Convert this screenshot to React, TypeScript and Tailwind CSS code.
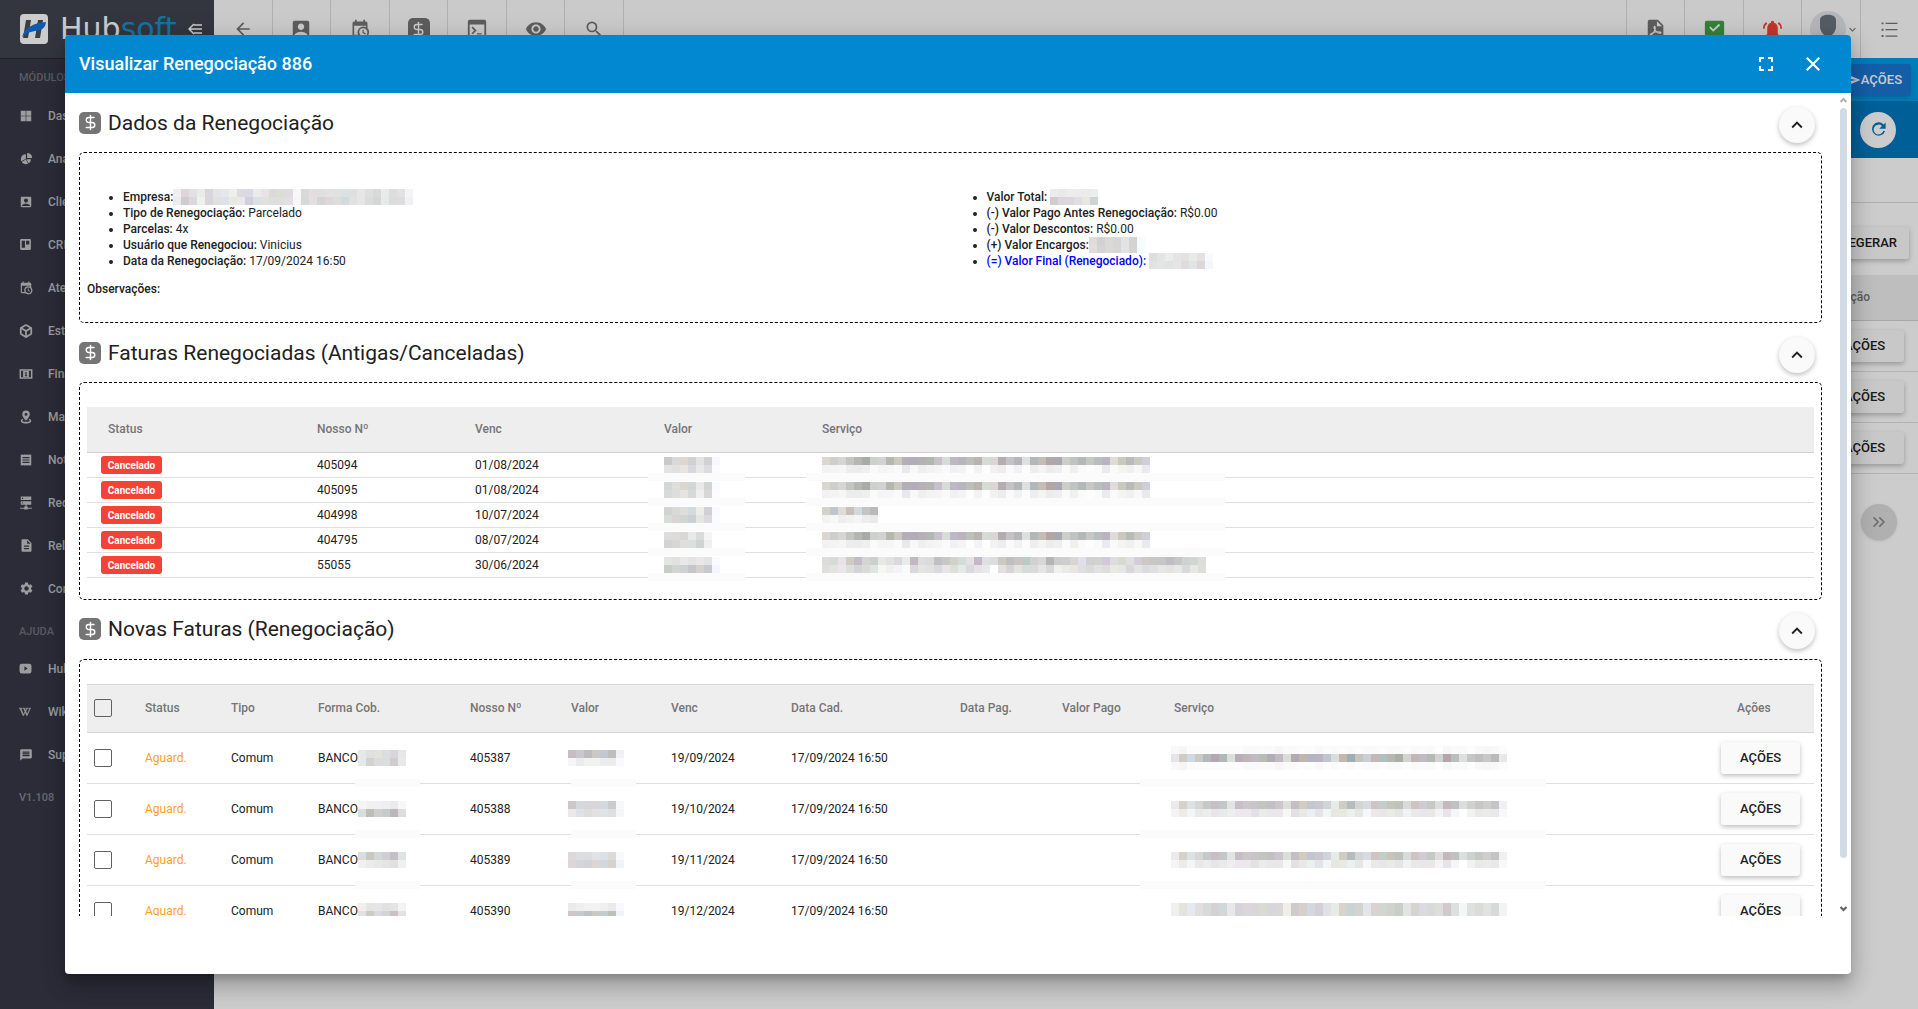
import React from 'react';
import {
  MdAccountBox,
  MdArrowBack,
  MdClose,
  MdDescription,
  MdFullscreen,
  MdKeyboardArrowDown,
  MdKeyboardArrowUp,
  MdMessage,
  MdReceipt,
  MdSearch,
  MdSend,
  MdSettings,
  MdVisibility,
} from 'react-icons/md';
import { FaWikipediaW } from 'react-icons/fa';
import { Box, ChevronsRight, DollarSign } from 'lucide-react';

interface IconProps {
  size?: number;
  className?: string;
}

const Glyph: React.FC<IconProps & { d: string }> = ({ d, size = 24, className }) => (
  <svg width={size} height={size} viewBox="0 0 24 24" fill="currentColor" fillRule="evenodd" className={className}>
    <path d={d} />
  </svg>
);

const ICONS = {
  grid: 'M3 3h8.5v8.5H3zM12.5 3H21v8.5h-8.5zM3 12.5h8.5V21H3zM12.5 12.5H21V21h-8.5z',
  pie: 'M21,11H13V3A8,8 0 0,1 21,11M19,13C19,15.78 17.58,18.23 15.43,19.67L11.58,13H19M11,21C8.22,21 5.77,19.58 4.33,17.43L10.82,13.68L14.56,20.17C13.5,20.7 12.28,21 11,21M3,13A8,8 0 0,1 11,5V12.42L3.83,16.56C3.3,15.5 3,14.28 3,13Z',
  trello: 'M4 2h16a2 2 0 0 1 2 2v16a2 2 0 0 1-2 2H4a2 2 0 0 1-2-2V4a2 2 0 0 1 2-2zM5 5v13h6V5zM13 5v7h6V5z',
  calendar:
    'M15,13H16.5V15.82L18.94,17.23L18.19,18.53L15,16.69V13M19,8H5V19H9.67C9.24,18.09 9,17.07 9,16A7,7 0 0,1 16,9C17.07,9 18.09,9.24 19,9.67V8M5,21C3.89,21 3,20.1 3,19V5C3,3.89 3.89,3 5,3H6V1H8V3H16V1H18V3H19A2,2 0 0,1 21,5V11.1C22.24,12.36 23,14.09 23,16A7,7 0 0,1 16,23C14.09,23 12.36,22.24 11.1,21H5M16,11.15A4.85,4.85 0 0,0 11.15,16C11.15,18.68 13.32,20.85 16,20.85A4.85,4.85 0 0,0 20.85,16C20.85,13.32 18.68,11.15 16,11.15Z',
  cash: 'M1 4h22v16H1zM3.500 6.500v11h17v-11zM7 7h10v10H7zM11 8.500v1.200h-1v1.500h1.200v3H10V15.700h4V14.200h-1V8.500z',
  marker:
    'M12 1a6.500 6.500 0 0 1 6.500 6.500C18.500 12 12 18 12 18S5.500 12 5.500 7.500A6.500 6.500 0 0 1 12 1zM12 5a2.500 2.500 0 1 0 0 5a2.500 2.500 0 0 0 0-5zM6 15l1.500 1.600C6 17.300 5.500 18 6 18.800C7.500 20.800 16.500 20.800 18 18.800C18.500 18 18 17.300 16.500 16.600L18 15C21 16.500 22 19 20 21C17 24 7 24 4 21C2 19 3 16.500 6 15z',
  server: 'M3 1h18v6H3zM3 9h18v6H3zM11 15h2v3h2v2h7v2h-7v1H9v-1H2v-2h7v-2h2zM5 3v2h2V3zM5 11v2h2v-2z',
  youtube: 'M5 3h14a4 4 0 0 1 4 4v10a4 4 0 0 1-4 4H5a4 4 0 0 1-4-4V7a4 4 0 0 1 4-4zM10 8v8l6-4z',
  console:
    'M4 2h16a2 2 0 0 1 2 2v16a2 2 0 0 1-2 2H4a2 2 0 0 1-2-2V4a2 2 0 0 1 2-2zM4 7v13h16V7zM6 10.500l1.300-1.300L11.600 13.500L7.300 17.800L6 16.500l3-3zM12 16.500h5v1.500h-5z',
  refresh:
    'M18.400 5.600L21 3v8h-8l3.400-3.400A6.200 6.200 0 1 0 18 13.800h2.300A8.400 8.400 0 1 1 18.400 5.600z',
  bell: 'M12 2a1.800 1.800 0 0 1 1.800 1.800v.4A6.500 6.500 0 0 1 18 10.500V17l2 2v1H4v-1l2-2v-6.500a6.500 6.500 0 0 1 4.200-6.300v-.4A1.800 1.800 0 0 1 12 2zM4.500 3.500L6 5A8 8 0 0 0 3 11H1A10 10 0 0 1 4.500 3.500zM19.500 3.500A10 10 0 0 1 23 11h-2a8 8 0 0 0-3-6z',
  check: 'M3 2h18a2 2 0 0 1 2 2v13a2 2 0 0 1-2 2h-5l-4 4-4-4H3a2 2 0 0 1-2-2V4a2 2 0 0 1 2-2zM6 10l4.500 4.500L18.500 7L17 5.500l-6.500 6.200-3-3z',
  list: 'M2 3h2.500v2.500H2zM7 3.500h15v1.500H7zM2 11h2.500v2.500H2zM7 11.500h15V13H7zM2 19h2.500v2.500H2zM7 19.500h15V21H7z',
};

const MoneyIcon: React.FC = () => (
  <span className="inline-flex h-[22px] w-[22px] shrink-0 items-center justify-center rounded-[5px] bg-[#757575] text-white">
    <DollarSign size={17} strokeWidth={2} />
  </span>
);

const PdfIcon: React.FC = () => (
  <svg width="22" height="22" viewBox="0 0 24 24">
    <path d="M5 2h9l6 6v12a2 2 0 0 1-2 2H5a2 2 0 0 1-2-2V4a2 2 0 0 1 2-2zM13 3.500V9h5.500z" fill="currentColor" fillRule="evenodd" />
    <path
      d="M6 19C9 18 12 12 11 9.500C10.500 8.500 9.500 9.500 10 11C11 14.500 14 17 17 16.500C18 16 17 15 15 15C12 15 8 16 6.500 17.500C5.500 18.500 5.500 19.200 6 19z"
      fill="none"
      stroke="#fdfdfd"
      strokeWidth="1.300"
    />
  </svg>
);

const ScrollArrow: React.FC<{ d: string; className: string }> = ({ d, className }) => (
  <svg width="7" height="6" viewBox="0 0 7 6" fill="none" stroke="currentColor" strokeWidth="2" className={className}>
    <path d={d} />
  </svg>
);

// Hidden values are covered by a grid of 8px squares
const Mosaic: React.FC<{ rows: string[]; className?: string }> = ({ rows, className = '' }) => (
  <span className={`inline-block align-top ${className}`} aria-hidden="true">
    {rows.map((row, i) => (
      <span key={i} className="flex">
        {row.split(' ').map((color, j) => (
          <span key={j} className="h-2 w-2" style={{ backgroundColor: `#${color}` }} />
        ))}
      </span>
    ))}
  </span>
);

const COMPANY = [
  'efefef dfd5d9 e3dfe4 e9ebe6 dad5dc e4e4e6 e3e8ea edf0e8 dedade dadae6 ebebeb e8e2e8 dadada d9dfd6 e3dae1 f8f8f8 d9d9d9 e4dde0 dfdfdf e2e2e2 e0e2e0 d9e3e3 dfdfdf e6e6e6 dddede d9d9d9 e9ebe9 dddddd e2e2e2 f3f4f6',
  'ececee cfccce dcd9de eef2e8 d9d6db dfe0e0 dde2e8 e7e9e0 e9e9e9 d3cddd d9e1e4 e0e0dc dededc dedede e0dfe3 f6f6f6 d7d9d9 e1e0df d4d4d4 ddd7dc ddddd9 d0dbdf dfe2e0 e6e6e6 dcdcda d5d7d7 e6eae8 dcdcdc dddddd f1f1f4',
];
const TOTAL = ['ececec e9e9e9 ececec ececec ebebeb e9eeee', 'cfcdcf dbd6d9 dbd8db dedfe5 eae6e2 cdd4d2'];
const CHARGES = ['e0dada d1d1d5 dbd9d5 d6d6d4 e2e3e4 d5d3d2 f6fbff', 'e2dcdc d3d3d7 dbd9d5 d6d6d4 e2e3e4 d5d3d2 f6fbff'];
const FINAL = ['dedede e4e4e4 e9eeea e4e4e4 e4e1e1 e7ebe7 e5e1e2 f7fafd', 'e0e4e1 e4e4e4 e1e2e2 e7e6e4 dddde0 e3e3e3 dcd6d8 f3f6fb'];

const VALUES = [
  ['c8caca d9d9d9 dcd7d3 d0d0d3 e2e2e2 d0d0d2 f7f8ff', 'e2e4e4 dfe0df e7e5e1 d8d9dd e8e8e8 dcdcde fcfcff'],
  ['d5d7d6 deddda d9d6d4 d4d6d6 e9e9e9 d2d4d4 fafbff', 'd8dad9 dddddd e5e4df d8dad9 efefef d7d7d7 fcfcff'],
  ['d2d4d4 d9dad8 dedddb d4d9dd ececea d1d1d1 f9faff', 'dadcda d6d5d1 d3d4d4 cbd0d4 e5e5e3 dcd9dc fafbff'],
  ['dddddd dddcdc d9d6d3 e9e9e9 dadada f4f5f4', 'd0d4d2 d7d7d5 dedede dddfdd d1d2d2 efefef'],
  ['e4e4e3 e1e1df e8e8e8 e4e4e4 e8e8e8 e3e3e3 fafaff', 'c9cdca d2d4d2 cfd0d1 c6c6ca d3d0cd c8c8cb f4f5ff'],
];

const SERVICE_A = [
  'dbd7d0 cecece d6d6d3 c4c4c2 b3b7b1 a7aca7 ced0cd d2d2d2 b5b8b1 c9c9c0 b2afb9 b1aeb8 b6b0b7 b4b7b1 c8c1cb d6ddd6 bcb8c4 b9b4be bdbfb9 b9b4b0 d5dcd6 dcd5d6 b5acb1 c4c1c7 b3b7b8 dee0e0 b2b7b9 c2bdb9 b2a7a5 aaa7b0 cbcec9 bfc3c3 b4b9b8 c7c7c5 b8bdbe b9b4c2 dfdcd8 c9c9c0 b7bcbb ccc9c0 cfcedb',
  'f2f2f2 f4f4f4 f6f6f6 ededed ececec efefef fafafa f4f5f4 f6f6f6 fafafa e8e8ed f8f8f8 efefef f3f3f3 f5f5f5 fafafa f1f1f5 f4f4f4 fdfdfd f3f3f5 fdfdfd f2f2f2 ededef fafafa f2f2f4 fcfcfc eeeeee f4f4f3 ececec efeff2 fafafa f0f0ee f9faf9 fdfdfd fafafa ebebef fafafa f4f4f2 f0f0f0 f8f8f8 e9e9ee',
];
const SERVICE_B = ['d5d1c8 c1c5cb dcdcdc c9bfb8 d2d8dc c4c4c2 bbb8bf', 'f3f3f3 f8f8f8 eeeeee f2f2f2 f5f5f5 ededed e9e9e9'];
const SERVICE_C = [
  'dcdcd8 d8dad8 e8e2e6 d1cbc6 c1bcc7 d4d4d4 c9d0cd e8e8e6 e0e3e0 d9d9dc e7ece9 c3b8c0 dddddd d9dcd8 bfbfc4 c9c8c8 d1d2c8 d4dcda e2e2e2 c5b7c7 dfe0e6 dcdcdc ccc9c2 bfbfbf ccc2c6 bccac4 d1d1d1 d5d8d9 b5b5b5 cccccb ceced0 dad4d2 e0dfea d0d0d4 cfd3ce d3c8d8 ddddde d8dad1 dfdfdf d4cdd7 ccc9c4 c9c7c6 c5c6c8 c0bcc4 c6c6c6 d0d2d2 d0d6d4 dadedb',
  'dfdfdb e2e4e2 ebe6e9 dededc d4d3d6 d9dbd9 e1e5e2 f6f6f4 f0f0f0 f4f4f6 fafafa dcd7da e4e4e3 e1e0e2 dadadc e8e4e8 dce0db e4eae5 dbd9db e5e3e5 e9e9ec ffffff e3e0e0 d6d4d7 e3e4df d9dbda dadada e5e5e4 d9d8d8 f0f0ec e9ebe9 e7e6e2 dfdfe1 dadad9 e3e0e4 ddddda eae9e1 e5e7e5 d8d8da e4e4e4 dcdce0 e0e0e0 e6e6e5 e3e3e1 e7e9e9 d9d9db e9e7e6 dddddb',
];

const CANCELLED = [
  { number: '405094', due: '01/08/2024', value: VALUES[0], service: SERVICE_A },
  { number: '405095', due: '01/08/2024', value: VALUES[1], service: SERVICE_A },
  { number: '404998', due: '10/07/2024', value: VALUES[2], service: SERVICE_B },
  { number: '404795', due: '08/07/2024', value: VALUES[3], service: SERVICE_A },
  { number: '55055', due: '30/06/2024', value: VALUES[4], service: SERVICE_C },
];

const PLAN_STRONG =
  'e6e4e6 d1cbc6 d2dae1 cac9c8 b3b8b8 b5a6b3 b0b8b7 dbdfdc b9adb8 bdb5b8 c0bbc3 b7bcb4 b1afb5 c1bac2 d9ddd6 b3acaf bfb7af b5b5c1 bab3c2 c1c6ce d8dfdb c2b8b0 a2adb3 c4c4c2 cbced5 c4b7b8 b2bfbf b4b8b0 a9aea7 d3d3d2 c2b7b8 bfbac4 b4b9b5 d2d2d0 b5a6ac b8bfbc dfdfe0 c1c8c6 bfbfbf c8c8c8 bababa e7e8ea';
const PLAN_MID =
  'ebe9eb d4d0ca dce1e5 d6d6d4 c6c9ca c9bec5 c2c8c7 e1e4e2 c7bfc8 cbc6c7 c7c5c8 c2c6bf c2c0c5 ccc5cb dbdfdb c4bfc2 d1cbc1 c4c5ce cbc7d2 d0d4d9 e5ebe8 d0cbc3 b4bcbf d3d4d4 d7dbe1 cfc4c4 c5cdcb c4c5bd bfc2bb d8dbdc cec4c4 ceccd2 c5c9c6 dddddb c6b7bc bec3c2 dcdddf cbd2cf c7c8c5 cecece c4c4c4 eef0f1';
const PLAN_SOFT =
  'f4f4f4 ecebe7 f3f6f5 e9e9e9 ebeeeb e9e4e9 e9ebea eeeef1 ece8ed eee8ee e4e1e5 ebebeb e8e8eb e8e8e8 f7f7f5 e3e0e1 e9e8e6 eceff1 e3e3e9 f2f5f5 e6e7e3 e9e9e3 ecf0ee e5e7e5 f5f7fa ebe8e8 e8e6e8 e9ebe4 e5e5e6 f0f2f4 e9e9ea e8e6eb e9e8e7 f5f3f3 e8e3ea f5f7f7 ffffff f2f2f1 e9eae8 ebebeb e8e8e8 f8f8fb';
const PLAN_EVEN =
  'efeff0 e6e3df e6eaee dfdfdf d8dad9 d5cfd6 d3d7d7 e7e9e8 d8d3db dbd6da d9d6da d8dbd4 d8d6db dad6da eeeeea cfcbcb d5d0cb d5d7de d3cfd8 dfe1e4 e6ebe8 d6d3cc cbd2d2 d3d3d2 e3e5ea d8d3d1 d2d6d3 cfd3cc cacec8 e2e4e3 d7d3d0 dadae0 d7dad8 dddddb d0cace dce1df f4f7f7 dfe1df dbdbd9 e1e3e2 d8d9d8 f1f4f4';
const PLAN_FAINT =
  'f8f8f8 f5f5f5 fcfcfc fcfcfc fcfcfc fcfcfc fcfcfc fcfcfc fcfcfc f9f9f9 f9f9f9 fafafa fafafa f6f6f6 fafafa fafafa fcfcfc fcfcfc f9f9f9 fcfcfc fafafa fcfcfc fafafa fcfcfc fafafa fafafa fcfcfc fafafa fafafa fcfcfc f9f9f9 fafafa f9f9f9 fefefe f7f7f7 fafafa fafafa fdfdfd f8f8f8 f6f6f6 f8f8f8 fcfcfc';

const NEW_INVOICES = [
  {
    number: '405387',
    due: '19/09/2024',
    bank: ['e7e7e9 e0e0e0 e1e3dd dbddde d9d6da e7e7e9', 'e6e7e9 d2d2d0 dcdcdc dbdddc d1cccd e8e9e9'],
    value: ['c5bfc4 cac8cc bcbcbf ccc8c6 c1c8d0 bebfbc f0f1f4', 'f6f5f8 eaebef f1f1ef f1f1ef eceeee ededed fafafc'],
    service: [PLAN_FAINT, PLAN_STRONG, PLAN_FAINT],
  },
  {
    number: '405388',
    due: '19/10/2024',
    bank: ['f5f5f3 f1f1f1 f1f1f3 efefef eaeaec f7f7f7', 'dadddb bdbeb7 cdcece c7caca bdb7bc dcdddd'],
    value: ['cbc8ca d7d8da d5d8da dad6d3 d4d8e1 c9cdca f7f8fb', 'ebe7eb dee1e5 dcdddc e1e2e0 dfe3e6 dfe0de f4f5f8'],
    service: [PLAN_MID, PLAN_SOFT],
  },
  {
    number: '405389',
    due: '19/11/2024',
    bank: ['d9dddd c7c8c0 d5d6d8 cfcfd1 c4bfc4 e1e2e2', 'f0f0ee ebebeb e8e8ea e5e5e5 e0dfe2 f0f0f0'],
    value: ['ddd9db dcdde0 dddddf e1e3e7 dee1e4 dadbd9 f8f9fb', 'dcd6da d5d4d9 d1d4d6 dbd6d4 d2d6dd d4d3d0 f2f3f7'],
    service: [PLAN_MID, PLAN_SOFT],
  },
  {
    number: '405390',
    due: '19/12/2024',
    bank: ['efefed e5e5e3 e6e6e8 e1e1e3 e4e4e4 f3f3f3', 'dfe3df cbccc4 d9dadd d3d5d3 c8c2c8 e2e2e2'],
    value: ['eaeaec eeeeee f1f1f0 f2f2f1 efefef eaeaea f9f9fb', 'd0c5ca c6cacc bfc2c4 ccc8c4 c2cad2 bdbfbb f1f4f6'],
    service: [PLAN_EVEN, PLAN_EVEN],
  },
];

const MODULES = [
  { label: 'Dashboard', icon: <Glyph d={ICONS.grid} size={14} /> },
  { label: 'Analytics', icon: <Glyph d={ICONS.pie} size={15} /> },
  { label: 'Clientes', icon: <MdAccountBox size={14} /> },
  { label: 'CRM', icon: <Glyph d={ICONS.trello} size={13} /> },
  { label: 'Atendimento', icon: <Glyph d={ICONS.calendar} size={14} /> },
  { label: 'Estoque', icon: <Box size={14} strokeWidth={3} /> },
  { label: 'Financeiro', icon: <Glyph d={ICONS.cash} size={14} /> },
  { label: 'Mapas', icon: <Glyph d={ICONS.marker} size={14} /> },
  { label: 'Notas', icon: <MdReceipt size={14} /> },
  { label: 'Rede', icon: <Glyph d={ICONS.server} size={14} /> },
  { label: 'Relatórios', icon: <MdDescription size={15} /> },
  { label: 'Configurações', icon: <MdSettings size={15} /> },
];

const HELP = [
  { label: 'HubTube', icon: <Glyph d={ICONS.youtube} size={13} /> },
  { label: 'Wiki', icon: <FaWikipediaW size={12} stroke="currentColor" strokeWidth={24} /> },
  { label: 'Suporte', icon: <MdMessage size={14} /> },
];

const SideLink: React.FC<{ label: string; icon: React.ReactNode }> = ({ label, icon }) => (
  <a href="#" className="flex h-[43px] items-center text-xs text-[#c3c3c6]">
    <span className="flex w-[29px] justify-start">{icon}</span>
    {label}
  </a>
);

const Sidebar: React.FC = () => (
  <aside className="flex w-[214px] shrink-0 flex-col bg-[#363847] font-medium shadow-lg">
    <div className="flex h-[59px] shrink-0 items-center border-b border-[#262831] bg-[#41444f] pl-5">
      <svg width="28" height="30" viewBox="0 0 28 30">
        <rect width="28" height="30" rx="4" fill="#fff" />
        <path d="M6 6h5L8 24H3zM18 6h5L20 24h-5z" fill="#4b4e4f" />
        <path d="M2 23C5 13 14 9 26 8C25 16 20 16 15 17C9 18 5 20 2 23z" fill="#1570e0" />
      </svg>
      <span className="pl-3 font-['DejaVu_Sans'] text-[30px] leading-[36px] font-normal text-white">
        Hub<span className="text-[#1691cf]">soft</span>
      </span>
      <svg width="15" height="12" viewBox="0 0 15 12" fill="none" stroke="#fff" strokeWidth="1.500" className="ml-3 shrink-0">
        <path d="M6 2h8M1 6h13M6 10h8M6 1L1 6l5 5" />
      </svg>
    </div>
    <nav className="flex flex-col pl-[19px]">
      <p className="flex h-[35px] items-center pt-1 text-[11px] text-[#6f717c]">MÓDULOS</p>
      {MODULES.map((m) => (
        <SideLink key={m.label} {...m} />
      ))}
      <p className="flex h-[37px] items-center pt-2 text-[11px] text-[#6f717c]">AJUDA</p>
      {HELP.map((m) => (
        <SideLink key={m.label} {...m} />
      ))}
      <p className="flex h-[45px] items-center text-[11px] text-[#84868f]">V1.108</p>
    </nav>
  </aside>
);

const TopButton: React.FC<{ label: string; side: 'l' | 'r'; children: React.ReactNode }> = ({ label, side, children }) => (
  <button
    aria-label={label}
    className={`flex flex-1 items-center justify-center border-[#dcdcdc] text-[#757575] ${side === 'l' ? 'border-l' : 'border-r'}`}
  >
    {children}
  </button>
);

const RaisedButton: React.FC<{ children: React.ReactNode }> = ({ children }) => (
  <button className="h-8 min-w-[79px] rounded-[3px] bg-[#fafafa] px-3 text-[13px] font-medium text-[#212121] shadow-[0_2px_5px_rgba(0,0,0,0.26)]">
    {children}
  </button>
);

const Page: React.FC = () => (
  <div className="flex min-w-0 flex-1 flex-col bg-white">
    <header className="flex h-[58px] shrink-0 justify-between bg-[#fdfdfd]">
      <div className="flex w-[410px]">
        <TopButton label="Voltar" side="r"><MdArrowBack size={20} /></TopButton>
        <TopButton label="Clientes" side="r"><MdAccountBox size={22} /></TopButton>
        <TopButton label="Agenda" side="r"><Glyph d={ICONS.calendar} size={20} /></TopButton>
        <TopButton label="Financeiro" side="r"><MoneyIcon /></TopButton>
        <TopButton label="Console" side="r"><Glyph d={ICONS.console} size={22} /></TopButton>
        <TopButton label="Visualizar" side="r"><MdVisibility size={22} /></TopButton>
        <TopButton label="Buscar" side="r"><MdSearch size={20} /></TopButton>
      </div>
      <div className="flex w-[292px]">
        <TopButton label="PDF" side="l"><PdfIcon /></TopButton>
        <TopButton label="Mensagens" side="l"><Glyph d={ICONS.check} size={21} className="text-[#43a047]" /></TopButton>
        <TopButton label="Notificações" side="l"><Glyph d={ICONS.bell} size={21} className="text-[#f44336]" /></TopButton>
        <TopButton label="Usuário" side="l">
          <svg width="36" height="36" viewBox="0 0 36 36" className="ml-2 shrink-0">
            <circle cx="18" cy="18" r="18" fill="#e2e4e8" />
            <path d="M10 9C10 2 26 2 26 9L26 17C25 20 24 22 22 24V27H14V24C12 22 11 20 10 17z" fill="#69737d" />
          </svg>
          <MdKeyboardArrowDown size={13} className="shrink-0" />
        </TopButton>
        <TopButton label="Menu" side="l"><Glyph d={ICONS.list} size={19} /></TopButton>
      </div>
    </header>
    <div className="flex h-[43px] shrink-0 items-center justify-end bg-[#039be5] pr-[7px]">
      <button className="flex h-8 items-center rounded-[3px] bg-[#1976d2] pr-[9px] pl-3 text-[13px] font-medium text-white shadow-md">
        <MdSend size={14} />
        AÇÕES
      </button>
    </div>
    <div className="flex h-[57px] shrink-0 items-center justify-end bg-[#0277bd] pr-[22px]">
      <button aria-label="Atualizar" className="flex h-9 w-9 items-center justify-center rounded-full bg-white text-[#0277bd]">
        <Glyph d={ICONS.refresh} size={19} />
      </button>
    </div>
    <div className="h-[45px] shrink-0 border-b border-[#dcdcdc]" />
    <div className="flex h-[72px] shrink-0 items-center justify-end pt-2 pr-[9px]">
      <RaisedButton>REGERAR</RaisedButton>
    </div>
    <table className="w-full text-right">
      <thead>
        <tr className="h-[45px] border-b border-[#d0d0d0] bg-[#eeeeee]">
          <th scope="col" className="pr-12 text-xs font-medium text-[#757575]">Ação</th>
        </tr>
      </thead>
      <tbody>
        {[1, 2, 3].map((n) => (
          <tr key={n} className="h-[51px] border-b border-[#e0e0e0]">
            <td className="pr-[14px]"><RaisedButton>AÇÕES</RaisedButton></td>
          </tr>
        ))}
      </tbody>
    </table>
    <div className="flex justify-end pt-[30px] pr-[21px]">
      <button aria-label="Avançar" className="flex h-9 w-9 items-center justify-center rounded-full bg-[#dcdcdc] text-[#8a8a8a] shadow">
        <ChevronsRight size={20} />
      </button>
    </div>
  </div>
);

const Section: React.FC<{ title: string; children: React.ReactNode }> = ({ title, children }) => (
  <section>
    <div className="flex h-[59px] items-center justify-between pr-[7px]">
      <h2 className="flex items-center gap-[7px] text-[21px] leading-[30px] text-[#212121]">
        <MoneyIcon />
        {title}
      </h2>
      <button
        aria-label={`Recolher ${title}`}
        className="mt-1 flex h-9 w-9 items-center justify-center rounded-full bg-[#fafafa] text-[#212121] shadow-[0_2px_5px_rgba(0,0,0,0.26)]"
      >
        <MdKeyboardArrowUp size={22} />
      </button>
    </div>
    <div className="rounded-[5px] border border-dashed border-black px-[7px] pt-6 pb-[21px]">{children}</div>
  </section>
);

const MaskedCell: React.FC<{ rows: string[]; strip: string; className?: string }> = ({ rows, strip, className = '' }) => (
  <td className="relative">
    <Mosaic rows={rows} className={className} />
    <span className={`absolute -bottom-1 h-2 bg-[#fbfbfb] ${strip}`} />
  </td>
);

const CheckBox: React.FC<{ label: string }> = ({ label }) => (
  <input
    type="checkbox"
    aria-label={label}
    className="block h-[18px] w-[18px] appearance-none rounded-[2px] border border-[#616161] checked:bg-[#0288d1]"
  />
);

const CancelledTable: React.FC = () => (
  <table className="w-full table-fixed text-left text-xs text-[#212121]">
    <colgroup>
      <col className="w-[230px]" />
      <col className="w-[158px]" />
      <col className="w-[189px]" />
      <col className="w-[158px]" />
      <col />
    </colgroup>
    <thead>
      <tr className="h-[45px] border-b border-[#d0d0d0] bg-[#eeeeee] text-[#757575]">
        <th scope="col" className="pl-[21px] font-medium">Status</th>
        <th scope="col" className="font-medium">Nosso Nº</th>
        <th scope="col" className="font-medium">Venc</th>
        <th scope="col" className="font-medium">Valor</th>
        <th scope="col" className="font-medium">Serviço</th>
      </tr>
    </thead>
    <tbody>
      {CANCELLED.map((row) => (
        <tr key={row.number} className="h-[25px] border-b border-[#e0e0e0]">
          <td className="pl-[14px]">
            <span className="block h-[18px] w-[61px] rounded-[3px] bg-[#f44336] text-center text-[10px] leading-[19px] font-bold text-white">
              Cancelado
            </span>
          </td>
          <td>{row.number}</td>
          <td>{row.due}</td>
          <MaskedCell rows={row.value} strip="-left-4 w-[97px]" />
          <MaskedCell rows={row.service} strip="-left-4 w-[419px]" />
        </tr>
      ))}
    </tbody>
  </table>
);

const NewInvoicesTable: React.FC = () => (
  <table className="w-full table-fixed text-left text-xs text-[#212121]">
    <colgroup>
      <col className="w-[58px]" />
      <col className="w-[86px]" />
      <col className="w-[87px]" />
      <col className="w-[152px]" />
      <col className="w-[101px]" />
      <col className="w-[100px]" />
      <col className="w-[120px]" />
      <col className="w-[169px]" />
      <col className="w-[102px]" />
      <col className="w-[112px]" />
      <col />
      <col className="w-[93px]" />
    </colgroup>
    <thead>
      <tr className="h-12 border-y border-[#d6d6d6] bg-[#eeeeee] text-[#757575]">
        <th scope="col" className="pl-[7px]"><CheckBox label="Selecionar todas" /></th>
        <th scope="col" className="font-medium">Status</th>
        <th scope="col" className="font-medium">Tipo</th>
        <th scope="col" className="font-medium">Forma Cob.</th>
        <th scope="col" className="font-medium">Nosso Nº</th>
        <th scope="col" className="font-medium">Valor</th>
        <th scope="col" className="font-medium">Venc</th>
        <th scope="col" className="font-medium">Data Cad.</th>
        <th scope="col" className="font-medium">Data Pag.</th>
        <th scope="col" className="font-medium">Valor Pago</th>
        <th scope="col" className="font-medium">Serviço</th>
        <th scope="col" className="pl-4 font-medium">Ações</th>
      </tr>
    </thead>
    <tbody>
      {NEW_INVOICES.map((row) => (
        <tr key={row.number} className="h-[51px] border-b border-[#e0e0e0]">
          <td className="pl-[7px]"><CheckBox label={`Selecionar fatura ${row.number}`} /></td>
          <td className="text-[#ff9f1a]">Aguard.</td>
          <td>Comum</td>
          <td className="relative">
            <span className="flex items-center">
              BANCO
              <Mosaic rows={row.bank} />
            </span>
            <span className="absolute -bottom-1 left-[37px] h-2 w-[65px] bg-[#fbfbfb]" />
          </td>
          <td>{row.number}</td>
          <MaskedCell rows={row.value} strip="left-0 w-[65px]" className="-ml-[3px]" />
          <td>{row.due}</td>
          <td>17/09/2024 16:50</td>
          <td />
          <td />
          <MaskedCell rows={row.service} strip="-left-[34px] w-[406px]" className="-ml-[3px]" />
          <td><RaisedButton>AÇÕES</RaisedButton></td>
        </tr>
      ))}
    </tbody>
  </table>
);

const RenegotiationModal: React.FC = () => (
  <div
    role="dialog"
    aria-label="Visualizar Renegociação 886"
    className="flex min-w-0 flex-1 flex-col overflow-hidden rounded bg-white shadow-[0_7px_8px_-4px_rgba(0,0,0,0.2),0_13px_19px_2px_rgba(0,0,0,0.14),0_5px_24px_4px_rgba(0,0,0,0.12)]"
  >
    <div className="flex h-[58px] shrink-0 items-center justify-between bg-[#0288d1] pr-[26px] pl-[14px] text-white">
      <h1 className="text-lg font-medium">Visualizar Renegociação 886</h1>
      <div className="flex gap-[23px]">
        <button aria-label="Tela cheia"><MdFullscreen size={24} /></button>
        <button aria-label="Fechar"><MdClose size={24} /></button>
      </div>
    </div>

    <div className="flex min-h-0 flex-1">
      <div className="min-w-0 flex-1 overflow-hidden pr-[18px] pl-[14px]">
        <Section title="Dados da Renegociação">
          <div className="grid grid-cols-2 pt-3 text-xs leading-4 text-[#212121]">
            <ul className="list-disc pl-9">
              <li><b className="font-medium">Empresa:</b><Mosaic rows={COMPANY} /></li>
              <li><b className="font-medium">Tipo de Renegociação:</b> Parcelado</li>
              <li><b className="font-medium">Parcelas:</b> 4x</li>
              <li><b className="font-medium">Usuário que Renegociou:</b> Vinicius</li>
              <li><b className="font-medium">Data da Renegociação:</b> 17/09/2024 16:50</li>
            </ul>
            <ul className="list-disc pl-9">
              <li><b className="font-medium">Valor Total:</b> <Mosaic rows={TOTAL} /></li>
              <li><b className="font-medium">(-) Valor Pago Antes Renegociação:</b> R$0.00</li>
              <li><b className="font-medium">(-) Valor Descontos:</b> R$0.00</li>
              <li><b className="font-medium">(+) Valor Encargos:</b><Mosaic rows={CHARGES} /></li>
              <li>
                <b className="font-medium text-[#0000ff]">(=) Valor Final (Renegociado):</b> <Mosaic rows={FINAL} />
              </li>
            </ul>
          </div>
          <p className="pt-3 pb-1 text-xs leading-4 font-medium text-[#212121]">Observações:</p>
        </Section>

        <Section title="Faturas Renegociadas (Antigas/Canceladas)">
          <CancelledTable />
        </Section>

        <Section title="Novas Faturas (Renegociação)">
          <NewInvoicesTable />
        </Section>
      </div>

      <div className="mr-1 flex w-[7px] flex-col items-center justify-between pt-1 pb-1">
        <ScrollArrow d="M.5 5L3.500 2L6.500 5" className="shrink-0 text-[#b0b0b0]" />
        <div className="mt-[5px] h-[750px] w-full rounded bg-[#d0dbe5]" />
        <ScrollArrow d="M.5 1L3.500 4L6.500 1" className="mt-auto shrink-0 text-[#616161]" />
      </div>
    </div>
    <div className="h-[58px] shrink-0" />
  </div>
);

const App: React.FC = () => (
  <div className="relative flex h-screen overflow-hidden font-['Roboto',sans-serif]">
    <Sidebar />
    <Page />
    <div className="absolute inset-0 flex bg-black/20 py-[35px] pr-[67px] pl-[65px]">
      <RenegotiationModal />
    </div>
  </div>
);

export default App;
